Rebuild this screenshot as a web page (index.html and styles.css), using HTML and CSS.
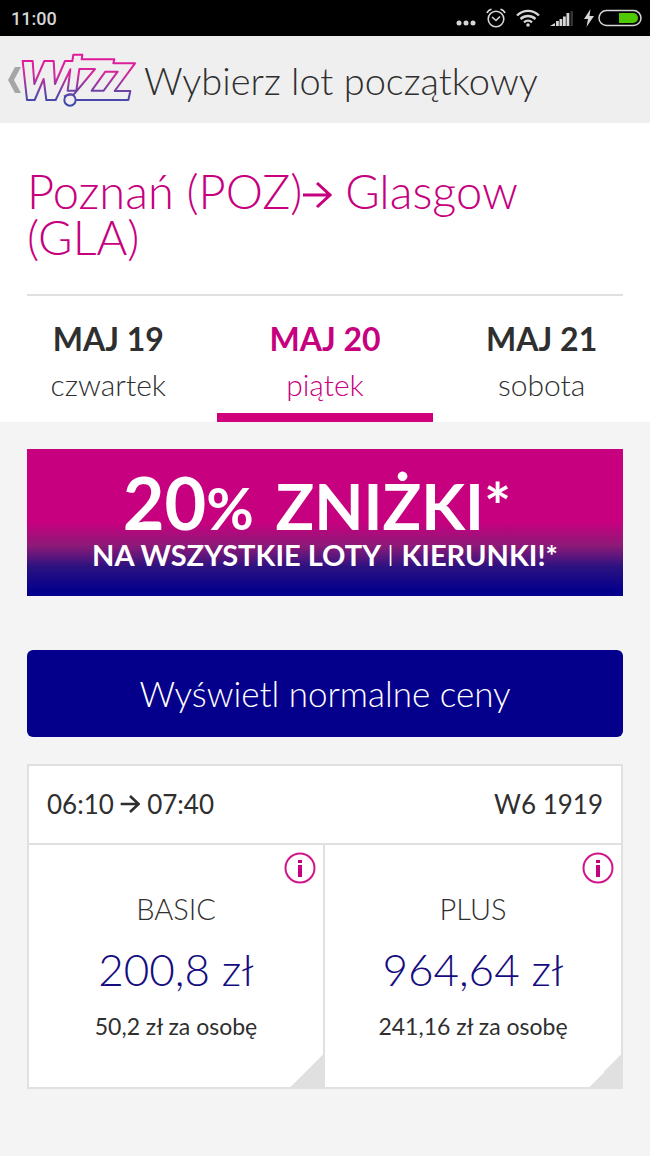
FILE: index.html
```html
<!DOCTYPE html>
<html lang="pl">
<head>
    <meta charset="UTF-8">
    <meta name="viewport" content="width=device-width, initial-scale=1.0">
    <title>Wybierz lot początkowy</title>
    <link rel="stylesheet" href="styles.css">
</head>
<body>
    <!-- Status bar -->
    <div class="status-bar">
        <span class="clock">11:00</span>
        <div class="status-icons">
            <svg width="20" height="20" viewBox="0 0 20 20" fill="#d6d6d6">
                <circle cx="3" cy="15" r="2.5"/><circle cx="10" cy="15" r="2.5"/><circle cx="17" cy="15" r="2.5"/>
            </svg>
            <svg width="20" height="20" viewBox="0 0 20 20" fill="none" stroke="#d6d6d6" stroke-width="1.6">
                <circle cx="10" cy="11" r="7.8"/>
                <path d="M6 9l4 3.500 4-4M1 5c.8-2 2.300-3.300 4.500-3.800M19 5c-.8-2-2.300-3.300-4.500-3.800"/>
            </svg>
            <svg width="24" height="20" viewBox="0 0 24 20" fill="none" stroke="#d6d6d6" stroke-width="2.400">
                <path d="M1 7.500C7.500 1.300 16.500 1.300 23 7.500M4.500 11c4.300-4 10.700-4 15 0M8 14.300c2.300-2 5.700-2 8 0"/>
                <circle cx="12" cy="17" r="1.800" fill="#d6d6d6" stroke="none"/>
            </svg>
            <svg width="24" height="20" viewBox="0 0 24 20" fill="#d6d6d6">
                <path d="M0 18l5-3v3zM6 13h2.800v5H6zM9.500 11h2.800v7H9.500zM13 8.500h2.800V18H13zM16.500 5h2.800v13h-2.800z"/>
                <path d="M20.500 3H23v15h-2.500z" fill="#333"/>
            </svg>
            <svg class="bolt" width="10" height="20" viewBox="0 0 10 20" fill="#d6d6d6">
                <path d="M6.500 1L0 11h4l-1.500 8L10 8H5.500z"/>
            </svg>
            <svg width="44" height="18" viewBox="0 0 44 18">
                <rect x="1" y="1.500" width="42" height="15" rx="7.500" fill="none" stroke="#d6d6d6" stroke-width="1.500"/>
                <path d="M21 4h14a5 5 0 0 1 0 10H21z" fill="#4fc800"/>
            </svg>
        </div>
    </div>

    <header class="header">
        <a href="#" class="back" aria-label="Wstecz">
            <svg width="13" height="26" viewBox="0 0 13 26" fill="#a6a6a6">
                <path d="M7 0h6L6 13l7 13H7L0 13z"/>
            </svg>
            <svg width="116" height="56" viewBox="64 154 348 168" fill="none" stroke="url(#wizz)" stroke-width="6" stroke-linejoin="round">
                <defs>
                    <linearGradient id="wizz" gradientUnits="userSpaceOnUse" x1="0" y1="160" x2="0" y2="316">
                        <stop offset="0" stop-color="#e6149a"/>
                        <stop offset="0.4" stop-color="#d02a9a"/>
                        <stop offset="0.8" stop-color="#5548a8"/>
                        <stop offset="1" stop-color="#3d46ac"/>
                    </linearGradient>
                </defs>
                <path d="M193 288Q204 280 222 282L286 205H239L230 270H204L212 206L168 298H140L132 235L105 298H82L69 181H99L104 250L134 181H162L166 250L196 181H218L221 162H248L246 176H344L341 188H406L345 271H392L386 298H229"/>
                <path d="M317 213H354L312 270H276z"/>
                <circle cx="211" cy="298" r="17"/>
            </svg>
        </a>
        <h1>Wybierz lot początkowy</h1>
    </header>

    <section class="route">
        <h2>Poznań (POZ)<svg class="arrow" viewBox="0 0 30 28"><path d="M1 14h27M15 2l13 12-13 12"/></svg> Glasgow (GLA)</h2>
        <nav class="days">
            <a href="#" class="day"><strong>MAJ 19</strong><span>czwartek</span></a>
            <a href="#" class="day active" aria-current="date"><strong>MAJ 20</strong><span>piątek</span></a>
            <a href="#" class="day"><strong>MAJ 21</strong><span>sobota</span></a>
        </nav>
    </section>

    <main class="content">
        <div class="banner">
            <p class="banner-title"><span class="amount">20</span><span class="percent">%</span> ZNIŻKI*</p>
            <p class="banner-text">NA WSZYSTKIE LOTY <span class="thin">I</span> KIERUNKI!*</p>
        </div>

        <button type="button" class="btn-prices">Wyświetl normalne ceny</button>

        <section class="flight">
            <div class="flight-header">
                <span>06:10 <svg class="arrow" viewBox="0 0 30 28"><path d="M1 14h27M15 2l13 12-13 12"/></svg> 07:40</span>
                <span>W6 1919</span>
            </div>
            <div class="fares">
                <div class="fare">
                    <button type="button" class="info" aria-label="Informacje o BASIC">
                        <svg width="32" height="32" viewBox="0 0 32 32"><circle cx="16" cy="16" r="14.500"/><path d="M14 8h4v3h-4zM14 13h4v12h-4z"/></svg>
                    </button>
                    <h3>BASIC</h3>
                    <p class="price">200,8 zł</p>
                    <p class="per-person">50,2 zł za osobę</p>
                </div>
                <div class="fare">
                    <button type="button" class="info" aria-label="Informacje o PLUS">
                        <svg width="32" height="32" viewBox="0 0 32 32"><circle cx="16" cy="16" r="14.500"/><path d="M14 8h4v3h-4zM14 13h4v12h-4z"/></svg>
                    </button>
                    <h3>PLUS</h3>
                    <p class="price">964,64 zł</p>
                    <p class="per-person">241,16 zł za osobę</p>
                </div>
            </div>
        </section>
    </main>
</body>
</html>
```
FILE: styles.css
```css
* {
    margin: 0;
    padding: 0;
    box-sizing: border-box;
}

body {
    background: #f4f4f4;
    color: #2f2f2f;
    font-family: Lato, 'Open Sans', sans-serif;
    font-weight: 300;
}

a {
    color: inherit;
    text-decoration: none;
}

button {
    border: none;
    font-family: inherit;
    cursor: pointer;
}

.status-bar {
    display: flex;
    justify-content: space-between;
    align-items: center;
    height: 36px;
    padding: 0 8px 0 11px;
    background: #000;
    color: #d6d6d6;
}

.clock {
    font: 500 18px Roboto, sans-serif;
}

.status-icons {
    display: flex;
    align-items: center;
    gap: 10px;
}

.status-icons .bolt {
    margin-right: -6px;
}

.header {
    display: flex;
    align-items: center;
    height: 87px;
    padding: 0 8px;
    gap: 7px;
    background: #efefef;
}

.back {
    display: flex;
    align-items: center;
}

.header h1 {
    font-size: 38px;
    font-weight: 300;
}

.route {
    background: #fff;
}

.route h2 {
    margin: 0 27px;
    padding: 45px 0 34px;
    border-bottom: 2px solid #e0e0e0;
    color: #c6007e;
    font-size: 47px;
    font-weight: 300;
    line-height: 46px;
}

.arrow {
    width: 30px;
    height: 28px;
    fill: none;
    stroke: currentColor;
    stroke-width: 3;
}

.days {
    display: grid;
    grid-template-columns: repeat(3, 1fr);
}

.day {
    display: flex;
    flex-direction: column;
    align-items: center;
    padding: 20px 0 7px;
    border-bottom: 9px solid transparent;
    font-size: 30px;
    line-height: 44px;
}

.day strong {
    font-size: 32px;
    font-weight: 700;
    line-height: 46px;
}

.day.active {
    border-color: #d0007a;
    color: #c6007e;
}

.content {
    padding: 27px;
}

.banner {
    padding: 22px 0 25px;
    background: linear-gradient(#c6007e 50%, #8c1a78 66%, #2c1280 80%, #05008c 96%);
    color: #fff;
    font-weight: 700;
    text-align: center;
}

.banner-title {
    padding-right: 16px;
    font-size: 64px;
    line-height: 63px;
}

.amount {
    font-size: 72px;
}

.percent {
    margin-right: 6px;
    font-size: 58px;
}

.banner-text {
    font-size: 29px;
    line-height: 32px;
}

.thin {
    font-weight: 300;
}

.btn-prices {
    display: block;
    width: 100%;
    margin: 54px 0 27px;
    padding: 20px;
    border-radius: 6px;
    background: #05008c;
    color: #fff;
    font-size: 35px;
    font-weight: 300;
    line-height: 47px;
}

.flight {
    border: 2px solid #e0e0e0;
    background: #fff;
}

.flight-header {
    display: flex;
    justify-content: space-between;
    padding: 16px 18px;
    border-bottom: 2px solid #e0e0e0;
    font-size: 26px;
    font-weight: 400;
    line-height: 45px;
}

.flight-header .arrow {
    width: 20px;
    height: 20px;
    stroke-width: 4;
}

.fares {
    display: grid;
    grid-template-columns: repeat(2, 1fr);
}

.fare {
    position: relative;
    padding: 41px 0;
    background: linear-gradient(135deg, transparent 50%, #e0e0e0 50%) right bottom / 32px 32px no-repeat;
    text-align: center;
}

.fare:first-child {
    border-right: 2px solid #e0e0e0;
}

.info {
    position: absolute;
    top: 7px;
    right: 7px;
    width: 32px;
    height: 32px;
    background: none;
    fill: #c6007e;
}

.info circle {
    fill: none;
    stroke: #d0148a;
    stroke-width: 2;
}

.fare h3 {
    font-size: 29px;
    font-weight: 300;
    line-height: 46px;
}

.price {
    color: #150c80;
    font-size: 44px;
    line-height: 74px;
}

.per-person {
    font-size: 23px;
    font-weight: 400;
    line-height: 40px;
}
```
